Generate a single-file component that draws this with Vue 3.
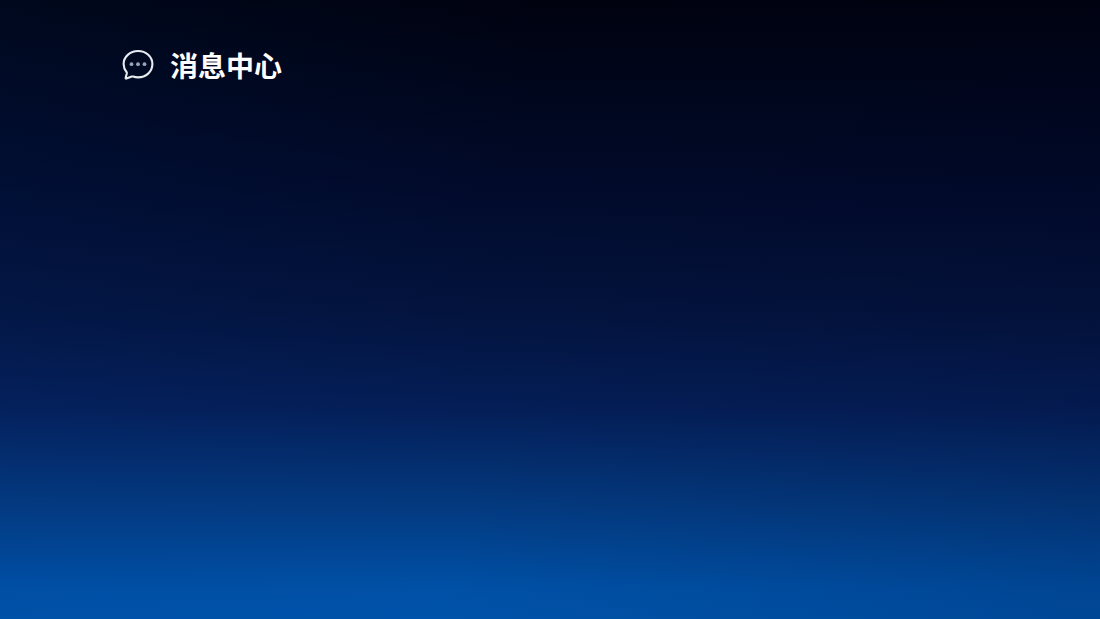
<script setup>
const title = '消息中心'
</script>

<template>
  <div class="page">
    <header class="head">
      <svg class="icon" width="32" height="32" viewBox="0 0 32 32" fill="none">
        <path d="M16 2C8 2 1.6 7.9 1.6 15.1c0 3 1.1 5.7 2.9 7.9.3.4.4.9.3 1.4l-1.2 4.6c-.1.4.3.7.7.6l5.6-2c.4-.1.8-.1 1.2 0 1.5.5 3.1.8 4.9.8 8 0 14.4-5.7 14.4-13.3S24 2 16 2Z" stroke="#e8ebf0" stroke-width="2.1" stroke-linejoin="round"/>
        <circle cx="9.5" cy="15.2" r="1.9" fill="#9aa3b5"/>
        <circle cx="16" cy="15.2" r="1.9" fill="#9aa3b5"/>
        <circle cx="22.5" cy="15.2" r="1.9" fill="#9aa3b5"/>
      </svg>
      <h1 class="title">{{ title }}</h1>
    </header>
  </div>
</template>

<style scoped>
.page {
  width: 1100px;
  height: 619px;
  overflow: hidden;
  background:
    linear-gradient(100deg, rgba(0, 60, 150, 0.1) 0%, rgba(0, 0, 30, 0) 45%, rgba(0, 0, 30, 0.14) 100%),
    linear-gradient(180deg, #00020f 0%, #000518 10%, #010a2a 30%, #03133d 50%, #041e57 66%, #033a80 82%, #0050a6 95%, #0053aa 100%);
  box-sizing: border-box;
  padding: 47px 0 0 122px;
}
.head {
  display: flex;
  align-items: center;
  gap: 16px;
  height: 36px;
}
.icon {
  flex: none;
}
.title {
  margin: 0;
  color: #fff;
  font-family: "Noto Sans CJK SC", "Noto Sans", sans-serif;
  font-size: 28px;
  font-weight: 700;
  line-height: 36px;
}
</style>

<style>
html, body { margin: 0; background: #00020f; }
</style>
